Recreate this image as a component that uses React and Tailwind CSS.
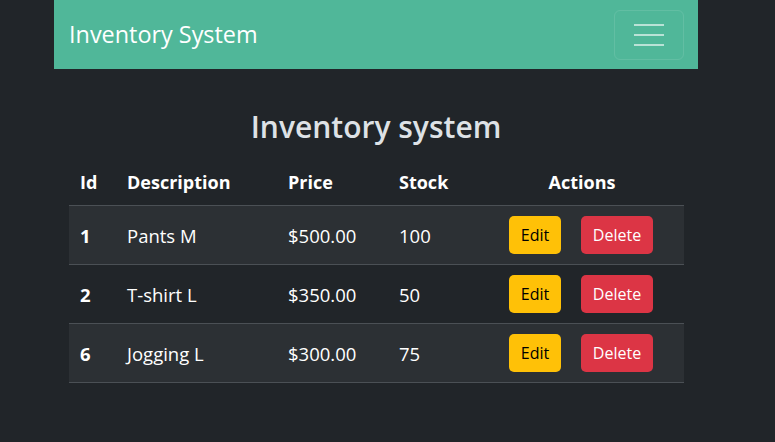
import React from "react";

const rows = [
  { id: 1, d: "Pants M", p: "$500.00", s: 100 },
  { id: 2, d: "T-shirt L", p: "$350.00", s: 50 },
  { id: 6, d: "Jogging L", p: "$300.00", s: 75 },
];

export default function App() {
  return (
    <div className="min-h-screen w-full bg-[#212529] text-[#dee2e6]" style={{ fontFamily: '"Open Sans", sans-serif' }}>
      <div className="ml-[54px] w-[644px]">
        <nav className="h-[69px] bg-[#50b799] flex items-center justify-between pl-[15px] pr-[14px]">
          <span className="text-[23.4px] text-white leading-none">Inventory System</span>
          <button className="w-[70px] h-[50px] rounded-[6px] border border-white/10 flex flex-col items-center justify-center gap-[8px]">
            <span className="block w-[30px] h-[2px] bg-white/60"></span>
            <span className="block w-[30px] h-[2px] bg-white/60"></span>
            <span className="block w-[30px] h-[2px] bg-white/60"></span>
          </button>
        </nav>
        <div className="px-[15px]">
          <h2 className="text-center text-[30px] font-semibold leading-[36px] mt-[40px] mb-[15px] text-[#dee2e6]">Inventory system</h2>
          <table className="w-[615px] table-fixed border-collapse text-[18.5px]">
            <colgroup>
              <col className="w-[47px]" />
              <col className="w-[161px]" />
              <col className="w-[111px]" />
              <col className="w-[92px]" />
              <col className="w-[204px]" />
            </colgroup>
            <thead>
              <tr className="h-[45px] border-b border-[#4b5055] text-white font-bold text-[18px]">
                <th className="text-left pl-[11px]">Id</th>
                <th className="text-left pl-[11px]">Description</th>
                <th className="text-left pl-[11px]">Price</th>
                <th className="text-left pl-[11px]">Stock</th>
                <th className="text-center">Actions</th>
              </tr>
            </thead>
            <tbody>
              {rows.map((r, i) => (
                <tr key={r.id} className={"h-[59px] border-b border-[#4b5055] text-white " + (i % 2 === 0 ? "bg-[#2c3034]" : "bg-[#212529]")}>
                  <td className="pl-[11px] pt-[3px] font-bold">{r.id}</td>
                  <td className="pl-[11px] pt-[3px]">{r.d}</td>
                  <td className="pl-[11px] pt-[3px]">{r.p}</td>
                  <td className="pl-[11px] pt-[3px]">{r.s}</td>
                  <td className="pt-[1px]">
                    <div className="flex items-center justify-center gap-[20px] pr-[2px]">
                      <button className="w-[52px] h-[38px] rounded-[5px] bg-[#ffc107] text-black text-[16px]">Edit</button>
                      <button className="w-[72px] h-[38px] rounded-[5px] bg-[#dc3545] text-white text-[16px]">Delete</button>
                    </div>
                  </td>
                </tr>
              ))}
            </tbody>
          </table>
        </div>
      </div>
    </div>
  );
}
